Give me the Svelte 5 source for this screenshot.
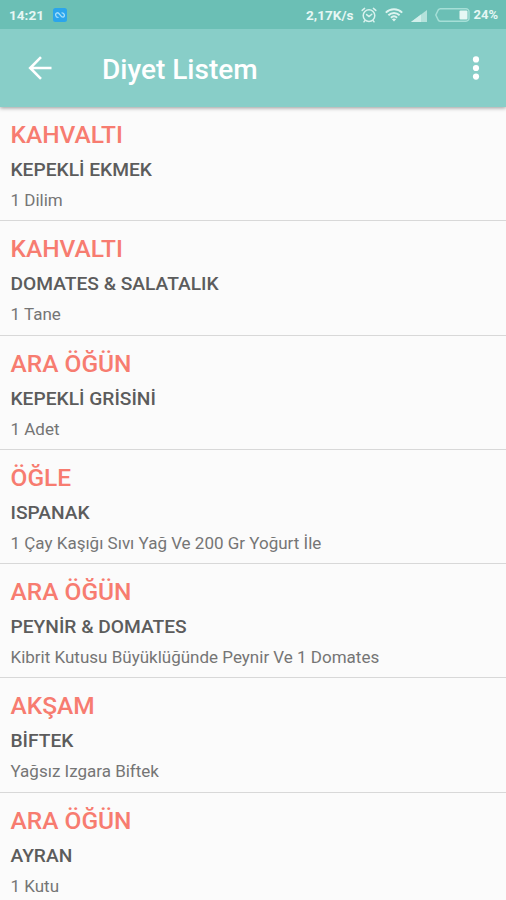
<script lang="ts">
    interface Meal {
        time: string;
        food: string;
        amount: string;
    }

    const meals: Meal[] = [
        { time: "KAHVALTI", food: "KEPEKLİ EKMEK", amount: "1 Dilim" },
        { time: "KAHVALTI", food: "DOMATES & SALATALIK", amount: "1 Tane" },
        { time: "ARA ÖĞÜN", food: "KEPEKLİ GRİSİNİ", amount: "1 Adet" },
        { time: "ÖĞLE", food: "ISPANAK", amount: "1 Çay Kaşığı Sıvı Yağ Ve 200 Gr Yoğurt İle" },
        { time: "ARA ÖĞÜN", food: "PEYNİR & DOMATES", amount: "Kibrit Kutusu Büyüklüğünde Peynir Ve 1 Domates" },
        { time: "AKŞAM", food: "BİFTEK", amount: "Yağsız Izgara Biftek" },
        { time: "ARA ÖĞÜN", food: "AYRAN", amount: "1 Kutu" },
    ];
</script>

<div class="screen">
    <header>
        <div class="status-bar">
            <span class="clock">14:21</span>
            <svg class="app-badge" width="14" height="14" viewBox="0 0 14 14">
                <rect width="14" height="14" rx="2.5" fill="#2ba5ec" />
                <path d="M5 9.4C2.4 9.4 1.8 5.4 4 4.8c2.6-.6 3.4 4.6 6 4.4 2.2-.3 1.8-4.4-1-4.4" fill="none" stroke="#a5defa" stroke-width="1.3" stroke-linecap="round" />
            </svg>
            <div class="indicators">
                <span class="speed">2,17K/s</span>
                <svg class="alarm" width="16" height="16" viewBox="0 0 16 16" fill="none" stroke="#d9f2ee" stroke-width="1.5" stroke-linecap="round">
                    <circle cx="8" cy="8.6" r="5.8" />
                    <path d="M1.2 3.4 3.6 1.4M14.8 3.4 12.4 1.4M5.6 7.6 8 9.6l2.8-2.4M4 13.6l-1 1.2M12 13.6l1 1.2" />
                </svg>
                <svg class="wifi" width="18" height="14" viewBox="0 0 18 14" fill="none" stroke="#def4f0" stroke-width="1.9">
                    <path d="M.8 4.6C5.4.2 12.6.2 17.2 4.6M3.4 7.3c3.2-3 8-3 11.2 0M5.9 9.8c1.8-1.7 4.4-1.7 6.2 0" />
                    <path d="M9 13.4 6.9 11.3q2.1-1.5 4.2 0z" fill="#def4f0" stroke="none" />
                </svg>
                <svg class="signal" width="16" height="12" viewBox="0 0 16 12">
                    <path d="M0 12 16 0v12z" fill="#b4e2db" />
                    <path d="M0 12 10 4.5V12z" fill="#d2efeb" />
                </svg>
                <svg class="battery" width="35" height="14" viewBox="0 0 35 14">
                    <path d="M5.4.8H31a3 3 0 0 1 3 3v6.4a3 3 0 0 1-3 3H5.4Q4 13.2 3.2 12L.8 7l2.4-5Q4 .8 5.4.8z" fill="none" stroke="#a6dfd7" stroke-width="1.5" />
                    <rect x="24.5" y="2.5" width="8" height="9" rx="1" fill="#e6f7f4" />
                </svg>
                <span class="percent">24%</span>
            </div>
        </div>
        <div class="toolbar">
            <button class="back" aria-label="Geri">
                <svg width="24" height="24" viewBox="0 0 24 24" fill="none" stroke="#fff" stroke-width="2.6">
                    <path d="M23.5 12H2.5M13 1.2 2.2 12 13 22.8" />
                </svg>
            </button>
            <h1>Diyet Listem</h1>
            <button class="menu" aria-label="Menü">
                <svg width="8" height="24" viewBox="0 0 8 24" fill="#fff">
                    <circle cx="4" cy="3.4" r="3.1" />
                    <circle cx="4" cy="12" r="3.1" />
                    <circle cx="4" cy="20.6" r="3.1" />
                </svg>
            </button>
        </div>
    </header>

    <ul class="meals">
        {#each meals as meal}
            <li>
                <h2>{meal.time}</h2>
                <h3>{meal.food}</h3>
                <p>{meal.amount}</p>
            </li>
        {/each}
    </ul>
</div>

<style>
    .screen {
        height: 900px;
        overflow: hidden;
        display: flex;
        flex-direction: column;
        background: #fbfbfb;
        font-family: Roboto, "Noto Sans", sans-serif;
    }

    header {
        flex: none;
        position: relative;
        background: #88cec8;
        color: #fff;
        box-shadow: 0 1px 4px rgba(0, 0, 0, 0.4);
    }

    .status-bar {
        display: flex;
        align-items: center;
        height: 29px;
        padding: 0 8px 0 9px;
        box-sizing: border-box;
        background: #6bbfb5;
        color: #e6f7f4;
        font-size: 13.6px;
        font-weight: 700;
    }

    .app-badge {
        margin-left: 9px;
    }

    .indicators {
        display: flex;
        align-items: center;
        margin-left: auto;
    }

    .alarm {
        margin-left: 8px;
    }

    .wifi {
        margin-left: 8px;
    }

    .signal {
        margin: 3px 0 0 8px;
    }

    .battery {
        margin: 0 3px 0 8px;
    }

    .percent {
        font-size: 13px;
    }

    .toolbar {
        display: flex;
        align-items: center;
        height: 78px;
        padding: 0 26px 0 28px;
    }

    button {
        display: flex;
        padding: 0;
        border: 0;
        background: none;
    }

    h1 {
        margin: 4px auto 0 50px;
        font-size: 28px;
        font-weight: 500;
        line-height: 36px;
    }

    .meals {
        margin: 0;
        padding: 0;
        list-style: none;
    }

    li {
        box-sizing: border-box;
        height: 114.3px;
        padding: 13px 10px 0 10.5px;
        border-bottom: 1px solid #d8d8d8;
    }

    h2 {
        margin: 0;
        color: #f77c70;
        font-size: 24.5px;
        font-weight: 500;
        line-height: 30px;
    }

    h3 {
        margin: 8px 0 0;
        color: #5c5c5c;
        font-size: 19.2px;
        font-weight: 500;
        line-height: 24px;
    }

    p {
        margin: 7px 0 0;
        color: #757575;
        font-size: 17px;
        line-height: 22px;
    }
</style>
